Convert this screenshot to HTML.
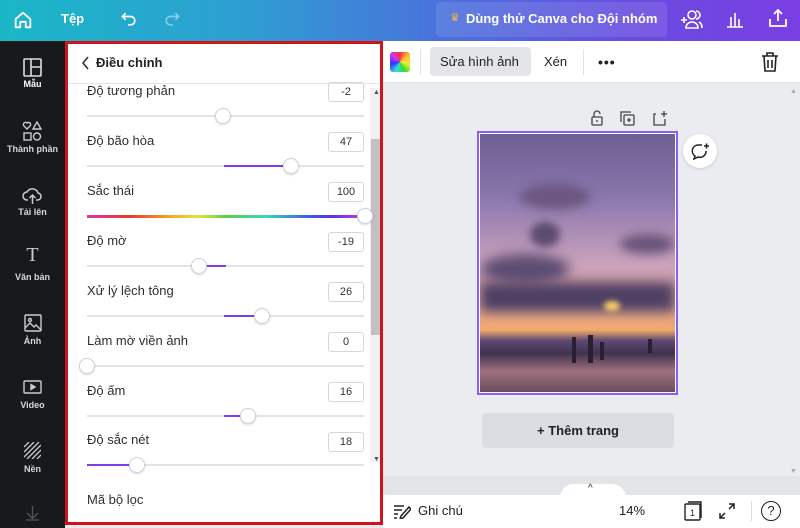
<!DOCTYPE html>
<html><head><meta charset="utf-8"><style>
*{margin:0;padding:0;box-sizing:border-box}
body{width:800px;height:528px;overflow:hidden;font-family:"Liberation Sans","Noto Sans CJK SC",sans-serif;background:#ebecf0;position:relative}
.a{position:absolute}
#top{left:0;top:0;width:800px;height:41px;background:linear-gradient(90deg,#1ab7c7 0%,#2d9fd2 30%,#4a72dc 55%,#6a4be0 80%,#7a3ee2 100%)}
#side{left:0;top:41px;width:65px;height:487px;background:#18191b}
.si{position:absolute;left:0;width:65px;text-align:center;color:#d8d8da;font-size:9px;font-weight:bold}
#panel{left:65px;top:41px;width:318px;height:484px;background:#fff;border:3px solid #d0141c}
.lbl{position:absolute;left:19px;font-size:13px;color:#2b2f33}
.box{position:absolute;left:260px;width:36px;height:20px;border:1px solid #d4d6da;border-radius:3px;font-size:11px;color:#333;text-align:center;line-height:18px}
.trk{position:absolute;left:19px;width:277px;height:2px;background:#e3e4e8}
.fill{position:absolute;height:2px;background:#7d3ee6}
.knob{position:absolute;width:16px;height:16px;border-radius:50%;background:#fff;border:1px solid #cfd1d6;box-shadow:0 1px 2px rgba(0,0,0,.15)}
#tb{left:383px;top:41px;width:417px;height:42px;background:#fff;border-bottom:1px solid #e2e3e6}
#bot{left:383px;top:495px;width:417px;height:33px;background:#fff}
</style></head><body>
<div class="a" id="top">
<svg class="a" style="left:12px;top:9px" width="22" height="22" viewBox="0 0 24 24" fill="none" stroke="#fff" stroke-width="2" stroke-linejoin="round"><path d="M4 11L12 4l8 7v9h-5v-6h-6v6H4z"/></svg>
<div class="a" style="left:61px;top:11px;color:#fff;font-weight:bold;font-size:13px">Tệp</div>
<svg class="a" style="left:119px;top:9px" width="20" height="20" viewBox="0 0 24 24" fill="none" stroke="#fff" stroke-width="2"><path d="M8 5L4 9l4 4M4 9h10a5 5 0 010 10h-3"/></svg>
<svg class="a" style="left:162px;top:9px" width="20" height="20" viewBox="0 0 24 24" fill="none" stroke="rgba(255,255,255,.45)" stroke-width="2"><path d="M16 5l4 4-4 4M20 9H10a5 5 0 000 10h3"/></svg>
<div class="a" style="left:436px;top:2px;width:231px;height:35px;background:rgba(255,255,255,.1);border-radius:4px"></div>
<div class="a" style="left:450px;top:11px;color:#f2b73e;font-size:11px">♛</div>
<div class="a" style="left:466px;top:11px;color:#fff;font-weight:bold;font-size:13px">Dùng thử Canva cho Đội nhóm</div>
<svg class="a" style="left:680px;top:8px" width="24" height="22" viewBox="0 0 24 22" fill="none" stroke="#fff" stroke-width="1.6"><path d="M1 12h6M4 9v6"/><circle cx="12" cy="7" r="4"/><path d="M6 20c0-4 3-6 6-6s6 2 6 6z"/><path d="M16 3a4 4 0 010 8M19 14c2 1 3 3 3 6"/></svg>
<svg class="a" style="left:725px;top:9px" width="20" height="20" viewBox="0 0 20 20" fill="none" stroke="#fff" stroke-width="1.6"><path d="M2 18h16M6 18V8M10 18V4M14 18V10"/></svg>
<svg class="a" style="left:768px;top:8px" width="20" height="20" viewBox="0 0 20 20" fill="none" stroke="#fff" stroke-width="1.8"><path d="M2 11v7h16v-7M10 13V2M6 6l4-4 4 4"/></svg>
</div>
<div class="a" id="side">
<svg class="a" style="left:23px;top:17px" width="19" height="19" viewBox="0 0 19 19" fill="none" stroke="#ddd" stroke-width="1.6"><rect x="1" y="1" width="17" height="17" rx="1"/><path d="M8 1v17M8 9h10"/></svg>
<div class="si" style="top:38px;color:#fff">Mẫu</div>
<svg class="a" style="left:22px;top:80px" width="21" height="21" viewBox="0 0 21 21" fill="none" stroke="#ccc" stroke-width="1.4"><path d="M5 8L2 5a2 2 0 013-3 2 2 0 013 3z"/><path d="M15 1l4 7h-8z"/><rect x="2" y="12" width="7" height="7"/><circle cx="15" cy="15.5" r="3.5"/></svg>
<div class="si" style="top:103px">Thành phần</div>
<svg class="a" style="left:22px;top:145px" width="21" height="19" viewBox="0 0 21 19" fill="none" stroke="#ccc" stroke-width="1.5"><path d="M6 14H5a4 4 0 010-8 6 6 0 0111 1 3.5 3.5 0 01-1 7h-1M10.5 9v9M7.5 12l3-3 3 3"/></svg>
<div class="si" style="top:166px">Tải lên</div>
<div class="si" style="top:204px;font-size:20px;font-weight:normal;font-family:'Liberation Serif',serif;color:#ccc;line-height:20px">T</div>
<div class="si" style="top:231px">Văn bản</div>
<svg class="a" style="left:24px;top:273px" width="18" height="18" viewBox="0 0 18 18" fill="none" stroke="#ccc" stroke-width="1.4"><rect x="1" y="1" width="16" height="16" rx="1"/><circle cx="6" cy="6" r="1.5"/><path d="M1 14l5-5 4 4 2-2 5 5"/></svg>
<div class="si" style="top:295px">Ảnh</div>
<svg class="a" style="left:23px;top:339px" width="19" height="14" viewBox="0 0 19 14" fill="none" stroke="#ccc" stroke-width="1.4"><rect x="1" y="1" width="17" height="12" rx="1"/><path d="M8 4.5v5l4-2.5z" fill="#ccc"/></svg>
<div class="si" style="top:359px">Video</div>
<svg class="a" style="left:24px;top:401px" width="17" height="17" viewBox="0 0 17 17" stroke="#ccc" stroke-width="1.3"><path d="M0 5L5 0M0 10L10 0M0 15L15 0M3 17L17 3M8 17l9-9M13 17l4-4"/></svg>
<div class="si" style="top:423px">Nền</div>
<svg class="a" style="left:25px;top:464px" width="15" height="16" viewBox="0 0 15 16" fill="none" stroke="#555" stroke-width="1.3"><path d="M7.5 1v12M2 8l5.5 5.5L13 8M1 15h13"/></svg>
</div>
<div class="a" id="panel">
<div class="a" style="left:0;top:0;width:312px;height:40px;border-bottom:1px solid #e3e4e8"></div>
<svg class="a" style="left:13px;top:12px" width="10" height="14" viewBox="0 0 10 14" fill="none" stroke="#333" stroke-width="1.6"><path d="M7 1L2 7l5 6"/></svg>
<div class="a" style="left:28px;top:11px;font-size:13px;font-weight:bold;color:#222">Điều chỉnh</div>
<div class="a" style="left:302px;top:44px;width:10px;height:374px;background:#f1f1f1"></div>
<div class="a" style="left:303px;top:95px;width:9px;height:196px;background:#c1c1c1"></div>
<div class="a" style="left:305px;top:45px;font-size:7px;color:#555">▲</div>
<div class="a" style="left:305px;top:412px;font-size:7px;color:#555">▼</div>

<div class="lbl" style="top:39px">Độ tương phản</div><div class="box" style="top:38px">-2</div>
<div class="trk" style="top:71px"></div><div class="knob" style="left:147px;top:64px"></div>

<div class="lbl" style="top:89px">Độ bão hòa</div><div class="box" style="top:88px">47</div>
<div class="trk" style="top:121px"></div><div class="fill" style="left:156px;width:60px;top:121px"></div><div class="knob" style="left:215px;top:114px"></div>

<div class="lbl" style="top:139px">Sắc thái</div><div class="box" style="top:138px">100</div>
<div class="trk" style="top:171px;height:3px;background:linear-gradient(90deg,#e0389a,#e23a2f 15%,#f5a623 30%,#e9e33a 40%,#5ed13e 50%,#38d3c4 65%,#3b5ee3 80%,#5935e0 88%,#c63ce0)"></div><div class="knob" style="left:289px;top:164px"></div>

<div class="lbl" style="top:189px">Độ mờ</div><div class="box" style="top:188px">-19</div>
<div class="trk" style="top:221px"></div><div class="fill" style="left:135px;width:23px;top:221px"></div><div class="knob" style="left:123px;top:214px"></div>

<div class="lbl" style="top:239px">Xử lý lệch tông</div><div class="box" style="top:238px">26</div>
<div class="trk" style="top:271px"></div><div class="fill" style="left:156px;width:32px;top:271px"></div><div class="knob" style="left:186px;top:264px"></div>

<div class="lbl" style="top:289px">Làm mờ viền ảnh</div><div class="box" style="top:288px">0</div>
<div class="trk" style="top:321px"></div><div class="knob" style="left:11px;top:314px"></div>

<div class="lbl" style="top:339px">Độ ấm</div><div class="box" style="top:338px">16</div>
<div class="trk" style="top:371px"></div><div class="fill" style="left:156px;width:16px;top:371px"></div><div class="knob" style="left:172px;top:364px"></div>

<div class="lbl" style="top:388px">Độ sắc nét</div><div class="box" style="top:388px">18</div>
<div class="trk" style="top:420px"></div><div class="fill" style="left:19px;width:44px;top:420px"></div><div class="knob" style="left:61px;top:413px"></div>

<div class="lbl" style="top:448px">Mã bộ lọc</div>
</div>

<div class="a" id="tb">
<div class="a" style="left:7px;top:11px;width:20px;height:20px;border-radius:3px;background:conic-gradient(#f33,#fb3,#ee3,#3d3,#3dd,#33f,#c3f,#f33)"></div>
<div class="a" style="left:37px;top:8px;width:1px;height:26px;background:#e2e3e6"></div>
<div class="a" style="left:47px;top:6px;width:101px;height:29px;background:#e4e5e9;border-radius:4px"></div>
<div class="a" style="left:57px;top:13px;font-size:13px;color:#222">Sửa hình ảnh</div>
<div class="a" style="left:161px;top:13px;font-size:13px;color:#222">Xén</div>
<div class="a" style="left:200px;top:8px;width:1px;height:26px;background:#e2e3e6"></div>
<div class="a" style="left:215px;top:13px;font-size:14px;font-weight:bold;color:#222;letter-spacing:1px">•••</div>
<svg class="a" style="left:378px;top:11px" width="18" height="20" viewBox="0 0 18 20" fill="none" stroke="#222" stroke-width="1.6"><path d="M1 4h16M6 4V1h6v3M3 4l1 15h10l1-15M7 8v8M11 8v8"/></svg>
</div>
<div class="a" style="left:790px;top:88px;font-size:7px;color:#aaa">▲</div>
<div class="a" style="left:790px;top:468px;font-size:7px;color:#aaa">▼</div>
<svg class="a" style="left:590px;top:110px" width="84" height="16" viewBox="0 0 84 16" fill="none" stroke="#444" stroke-width="1.3"><rect x="2" y="7" width="10" height="8" rx="1"/><path d="M4 7V4a3 3 0 016 0M7 10v2"/><rect x="34" y="5" width="10" height="10" rx="1"/><path d="M31 12V2h10M39 8v4M37 10h4"/><path d="M66 4h-2v11h11v-6M71 4h6M74 1v6"/></svg>
<div class="a" style="left:477px;top:131px;width:201px;height:264px;border:2px solid #8b5cf6;padding:1px;background:#fff">
<div style="width:100%;height:100%;position:relative;overflow:hidden;background:linear-gradient(180deg,#6e5f93 0%,#8a78ad 25%,#c9a1bc 50%,#e2a79c 65%,#f1a86a 76%,#5f4a71 80%,#3f3250 85%,#a0727e 92%,#6b4c5e 100%)">
<div class="a" style="left:40px;top:50px;width:70px;height:25px;background:#6c5780;border-radius:50%;filter:blur(5px)"></div>
<div class="a" style="left:50px;top:88px;width:30px;height:25px;background:#5d4b70;border-radius:50%;filter:blur(4px)"></div>
<div class="a" style="left:0;top:120px;width:90px;height:30px;background:#5d4d73;border-radius:50%;filter:blur(6px)"></div>
<div class="a" style="left:140px;top:100px;width:55px;height:20px;background:#6a5579;border-radius:50%;filter:blur(5px)"></div>
<div class="a" style="left:0;top:148px;width:195px;height:30px;background:#4d3f63;filter:blur(6px)"></div>
<div class="a" style="left:124px;top:167px;width:16px;height:10px;background:#ffd36a;border-radius:50%;filter:blur(3px)"></div>
<div class="a" style="left:92px;top:203px;width:4px;height:26px;background:#2a1f2e"></div>
<div class="a" style="left:108px;top:201px;width:5px;height:28px;background:#2a1f2e"></div>
<div class="a" style="left:120px;top:208px;width:4px;height:18px;background:#2a1f2e"></div>
<div class="a" style="left:168px;top:205px;width:4px;height:14px;background:#2a1f2e"></div>
</div></div>
<div class="a" style="left:683px;top:134px;width:34px;height:34px;border-radius:50%;background:#fff;box-shadow:0 1px 3px rgba(0,0,0,.15)"></div>
<svg class="a" style="left:690px;top:142px" width="20" height="18" viewBox="0 0 20 18" fill="none" stroke="#222" stroke-width="1.5"><path d="M12 3H8a6 6 0 00-3 11l-1 3 4-2a6 6 0 008-6"/><path d="M14 4h5M16.5 1.5v5"/></svg>
<div class="a" style="left:482px;top:413px;width:192px;height:35px;background:#dcdde2;border-radius:4px;text-align:center;line-height:35px;font-size:13px;font-weight:bold;color:#222">+ Thêm trang</div>
<div class="a" style="left:383px;top:476px;width:417px;height:19px;background:#e3e4e8"></div>
<div class="a" style="left:560px;top:484px;width:66px;height:14px;background:#fff;border-radius:14px 14px 0 0"></div>
<div class="a" style="left:588px;top:483px;font-size:10px;color:#333">^</div>
<div class="a" id="bot">
<svg class="a" style="left:10px;top:9px" width="18" height="15" viewBox="0 0 18 15" fill="none" stroke="#222" stroke-width="1.5"><path d="M1 2h10M1 6h8M1 10h4M1 14h3M16 3l-8 9-1 3 3-1 8-9z"/></svg>
<div class="a" style="left:35px;top:8px;font-size:13px;color:#222">Ghi chú</div>
<div class="a" style="left:236px;top:8px;font-size:13px;color:#222">14%</div>
<svg class="a" style="left:300px;top:5px" width="22" height="22" viewBox="0 0 22 22" fill="none" stroke="#222" stroke-width="1.4"><rect x="2" y="4" width="15" height="16" rx="1"/><path d="M5 2h13v16"/><text x="7" y="16" font-size="9" fill="#222" stroke="none" font-family="Liberation Sans">1</text></svg>
<svg class="a" style="left:336px;top:8px" width="16" height="16" viewBox="0 0 16 16" fill="none" stroke="#222" stroke-width="1.5"><path d="M10 1h5v5M15 1l-5 5M6 15H1v-5M1 15l5-5"/></svg>
<div class="a" style="left:368px;top:6px;width:1px;height:20px;background:#ddd"></div>
<div class="a" style="left:378px;top:6px;width:20px;height:20px;border:1.5px solid #222;border-radius:50%;text-align:center;font-size:13px;line-height:18px;color:#222">?</div>
</div>
</body></html>
